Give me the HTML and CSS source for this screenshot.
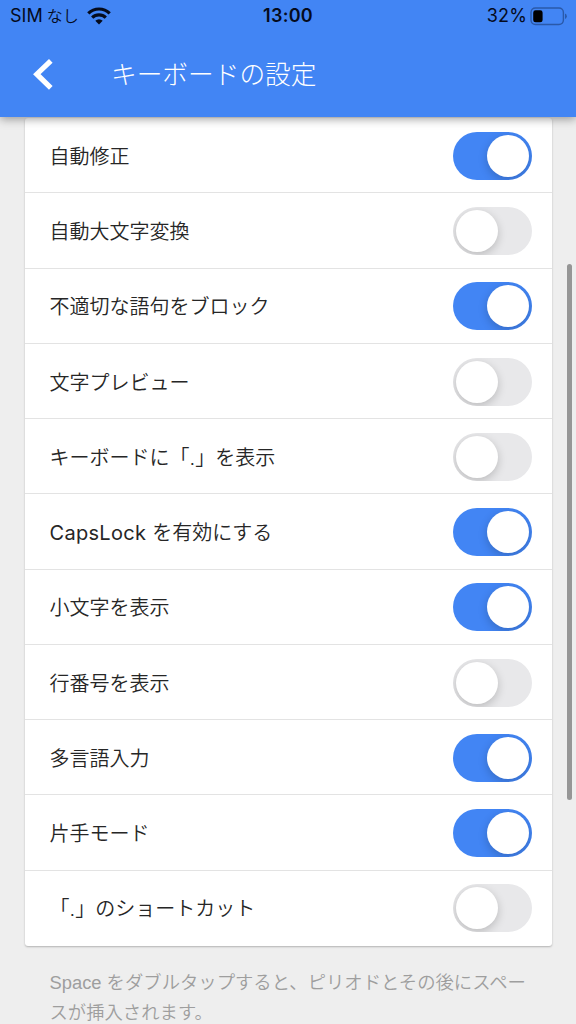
FILE: index.html
```html
<!DOCTYPE html>
<html lang="ja">
<head>
<meta charset="utf-8">
<title>キーボードの設定</title>
<link rel="stylesheet" href="styles.css">
</head>
<body>
<header class="header">
  <div class="status">
    <div class="carrier"><span class="sim">SIM</span><span class="none">なし</span>
      <svg class="wifi" width="24" height="18" viewBox="0 0 24 18"><g fill="none" stroke="#050b1d" stroke-width="3.2"><path d="M1.3 6.4a15.2 15.2 0 0 1 21.4 0"/><path d="M5.2 10.7a9.7 9.7 0 0 1 13.6 0"/></g><path d="M8.3 13.8a5.3 5.3 0 0 1 7.4 0L12 17.4z" fill="#050b1d"/></svg>
    </div>
    <div class="clock">13:00</div>
    <div class="power"><span>32%</span>
      <svg class="battery" width="38" height="19" viewBox="0 0 38 19"><rect x="1" y="1" width="32.4" height="16.5" rx="4.4" fill="none" stroke="#2a59a9" stroke-width="1.4"/><rect x="3.2" y="3.3" width="9.4" height="12" rx="2.4" fill="#000"/><path d="M35 6.5q1.8 .7 1.8 2.8t-1.8 2.8z" fill="#2a59a9"/></svg>
    </div>
  </div>
  <div class="titlebar">
    <svg class="back" width="22" height="34" viewBox="0 0 22 34"><path d="M18.8 2.8L4.8 16.2l14 13.6" fill="none" stroke="#fff" stroke-width="5.2"/></svg>
    <h1 class="title">キーボードの設定</h1>
  </div>
</header>
<main class="content">
  <ul class="card">
    <li class="row"><span class="label">自動修正</span><i class="switch on"></i></li>
    <li class="row"><span class="label">自動大文字変換</span><i class="switch"></i></li>
    <li class="row"><span class="label">不適切な語句をブロック</span><i class="switch on"></i></li>
    <li class="row"><span class="label">文字プレビュー</span><i class="switch"></i></li>
    <li class="row"><span class="label">キーボードに「.」を表示</span><i class="switch"></i></li>
    <li class="row"><span class="label"><span class="latin">CapsLock </span>を有効にする</span><i class="switch on"></i></li>
    <li class="row"><span class="label">小文字を表示</span><i class="switch on"></i></li>
    <li class="row"><span class="label">行番号を表示</span><i class="switch"></i></li>
    <li class="row"><span class="label">多言語入力</span><i class="switch on"></i></li>
    <li class="row"><span class="label">片手モード</span><i class="switch on"></i></li>
    <li class="row"><span class="label">「.」のショートカット</span><i class="switch"></i></li>
  </ul>
  <p class="note">Space をダブルタップすると、ピリオドとその後にスペー<br>スが挿入されます。</p>
</main>
<div class="scrollbar"></div>
</body>
</html>
```
FILE: styles.css
```css
* { box-sizing: border-box; }
body {
  margin: 0;
  height: 1024px;
  overflow: hidden;
  position: relative;
  background: #eee;
  font-family: Inter, "Noto Sans CJK JP", sans-serif;
  color: #262626;
}
.header {
  position: relative;
  z-index: 1;
  height: 117px;
  background: #4285f4;
  box-shadow: 0 2px 9px rgba(0, 0, 0, .38);
}
.status {
  display: grid;
  grid-template-columns: 1fr auto 1fr;
  align-items: center;
  height: 32px;
  padding: 0 8px 0 10px;
  color: #050b1d;
  font-size: 18px;
  line-height: 32px;
}
.carrier, .power { display: flex; align-items: center; }
.power { justify-content: flex-end; }
.power span { letter-spacing: .15px; }
.none { margin-left: 4px; font-size: 16px; font-weight: 350; }
.wifi { margin-left: 8px; }
.clock { font-size: 18px; font-weight: 600; letter-spacing: .3px; margin-right: 2px; }
.battery { margin-left: 3px; }
.titlebar {
  display: flex;
  align-items: center;
  height: 85px;
  padding-left: 32px;
}
.title {
  margin: 0 0 0 57px;
  color: #fff;
  font-size: 25.7px;
  font-weight: 300;
  line-height: 40px;
}
.content { padding: 1px 24px 0 25px; }
.card {
  margin: 0;
  padding: 0;
  list-style: none;
  background: #fff;
  border-radius: 3px;
  box-shadow: 0 1px 2px rgba(0, 0, 0, .25);
}
.row {
  display: flex;
  align-items: center;
  justify-content: space-between;
  height: 75.25px;
  padding: 1.5px 20px 0 25px;
  border-bottom: 1px solid #e3e3e3;
  font-size: 20px;
  font-weight: 350;
  line-height: 30px;
}
.row:last-child { border-bottom: 0; padding-top: .5px; }
.label { padding-top: 2px; margin-left: -.5px; }
.latin { font-weight: 400; letter-spacing: .3px; }
.switch {
  display: flex;
  width: 79px;
  height: 48px;
  padding: 3px;
  border-radius: 24px;
  background: #e8e8ea;
  overflow: hidden;
}
.switch::before {
  content: "";
  width: 42px;
  height: 42px;
  border-radius: 50%;
  background: #fff;
  box-shadow: 0 3px 10px rgba(0, 0, 0, .2);
}
.switch.on { justify-content: flex-end; background: #4285f4; }
.note {
  margin: 22px 0 0 24.5px;
  color: #9e9e9e;
  font-family: "Liberation Sans", "Noto Sans CJK JP", sans-serif;
  font-size: 18.35px;
  font-weight: 350;
  line-height: 30px;
  white-space: nowrap;
}
.scrollbar {
  position: absolute;
  top: 264px;
  right: 4px;
  width: 5px;
  height: 536px;
  border-radius: 3px;
  background: #969696;
}
```
